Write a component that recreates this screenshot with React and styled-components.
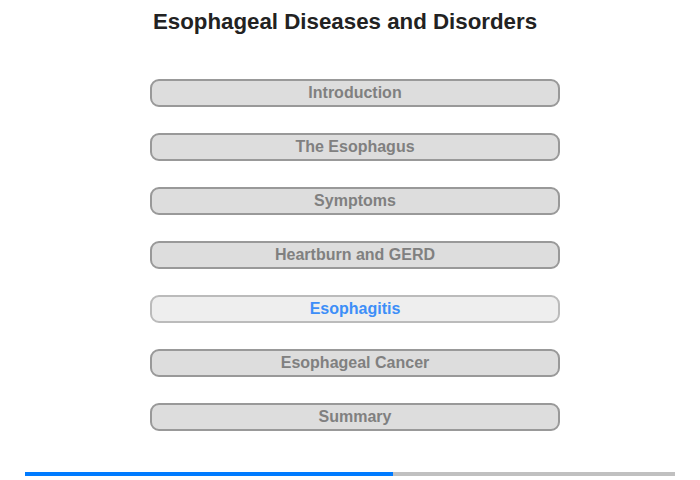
import React from 'react'
import styled, { createGlobalStyle, css } from 'styled-components'

const GlobalStyle = createGlobalStyle`
  html, body {
    margin: 0;
    padding: 0;
    background: #fff;
    font-family: "Liberation Sans", Arial, sans-serif;
  }
`

const items = [
  'Introduction',
  'The Esophagus',
  'Symptoms',
  'Heartburn and GERD',
  'Esophagitis',
  'Esophageal Cancer',
  'Summary'
]

const activeIndex = 4
const progress = 368 / 650

export default function App () {
  return (
    <Page>
      <GlobalStyle />
      <Title>Esophageal Diseases and Disorders</Title>
      <Menu>
        {items.map((label, i) => (
          <MenuButton key={label} active={i === activeIndex}>
            {label}
          </MenuButton>
        ))}
      </Menu>
      <Progress>
        <ProgressFill style={{ width: `${progress * 100}%` }} />
      </Progress>
    </Page>
  )
}

const Page = styled.div`
  width: 700px;
  height: 480px;
  display: flex;
  flex-direction: column;
  box-sizing: border-box;
  padding-top: 9px;
`

const Title = styled.h1`
  margin: 0;
  padding-right: 10px;
  text-align: center;
  font-size: 22.3px;
  line-height: 26px;
  font-weight: bold;
  color: #222;
`

const Menu = styled.div`
  margin: 44px 0 0 150px;
  width: 410px;
  display: flex;
  flex-direction: column;
  gap: 26px;
`

const MenuButton = styled.div`
  box-sizing: border-box;
  height: 28px;
  border: 2px solid #999;
  border-radius: 9px;
  background: #ddd;
  color: #808080;
  font-size: 16px;
  font-weight: bold;
  line-height: 24px;
  text-align: center;

  ${p => p.active && css`
    background: #eee;
    border-color: #bbb;
    color: #3d8ef8;
  `}
`

const Progress = styled.div`
  margin: 41px 0 0 25px;
  width: 650px;
  height: 4px;
  background: #c0c0c0;
`

const ProgressFill = styled.div`
  height: 100%;
  background: #007bff;
`
